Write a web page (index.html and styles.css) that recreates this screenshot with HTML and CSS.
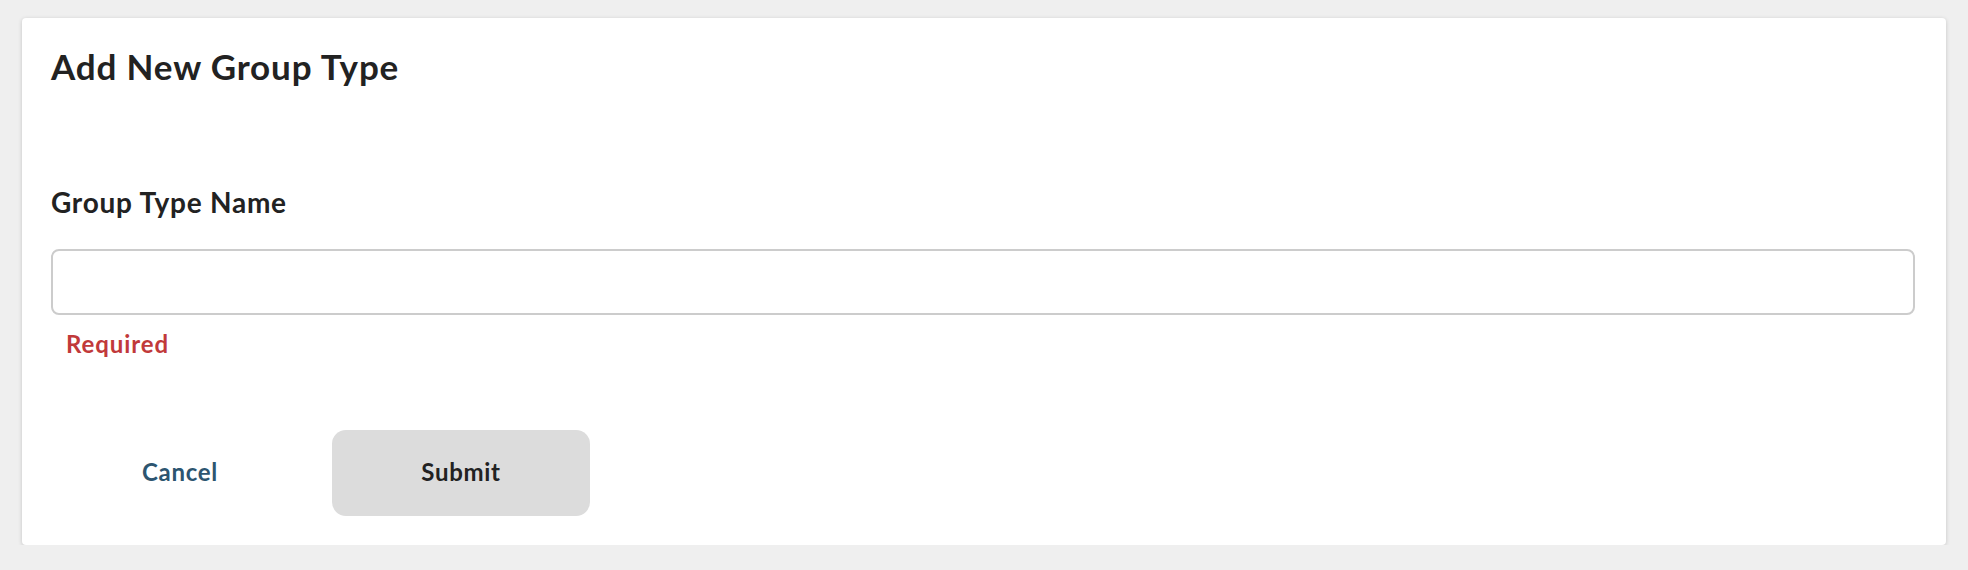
FILE: index.html
```html
<!DOCTYPE html>
<html lang="en">
<head>
<meta charset="utf-8">
<title>Add New Group Type</title>
<link rel="stylesheet" href="styles.css">
</head>
<body>
<div class="card">
  <h1 class="title">Add New Group Type</h1>
  <form class="form">
    <label class="label" for="gtname">Group Type Name</label>
    <input class="input" id="gtname" type="text">
    <div class="error">Required</div>
    <div class="actions">
      <button type="button" class="btn btn-cancel">Cancel</button>
      <button type="button" class="btn btn-submit">Submit</button>
    </div>
  </form>
</div>
</body>
</html>
```
FILE: styles.css
```css
html, body {
  margin: 0;
  padding: 0;
  background: #efefef;
}
body {
  padding: 18px 22px 0 22px;
  font-family: "Lato", "Liberation Sans", sans-serif;
  color: #222;
}
.card {
  background: #fff;
  border-radius: 4px;
  box-shadow: 0 1px 4px rgba(0, 0, 0, 0.18);
  padding: 27px 31px 29px 29px;
}
.title {
  margin: 0;
  font-size: 35px;
  line-height: 42px;
  font-weight: 700;
  letter-spacing: 0.85px;
  color: #222;
}
.form {
  display: flex;
  flex-direction: column;
  margin-top: 98px;
}
.label {
  font-size: 28px;
  line-height: 34px;
  font-weight: 700;
  letter-spacing: 0.75px;
  color: #222;
}
.input {
  margin-top: 30px;
  height: 66px;
  box-sizing: border-box;
  border: 2px solid #cccccc;
  border-radius: 8px;
  background: #fff;
  font: inherit;
  font-size: 24px;
  padding: 0 16px;
  outline: none;
}
.error {
  margin-top: 14px;
  margin-left: 15px;
  font-size: 24px;
  line-height: 29px;
  font-weight: 700;
  letter-spacing: 0.9px;
  color: #c1393a;
}
.actions {
  display: flex;
  gap: 23px;
  margin-top: 72px;
}
.btn {
  width: 258px;
  height: 86px;
  border: none;
  padding: 0 0 4px 0;
  font-family: inherit;
  font-size: 24px;
  font-weight: 700;
  letter-spacing: 0.7px;
  cursor: pointer;
}
.btn-cancel {
  background: transparent;
  color: #2d5570;
}
.btn-submit {
  background: #dcdcdc;
  color: #222;
  border-radius: 14px;
}
```
